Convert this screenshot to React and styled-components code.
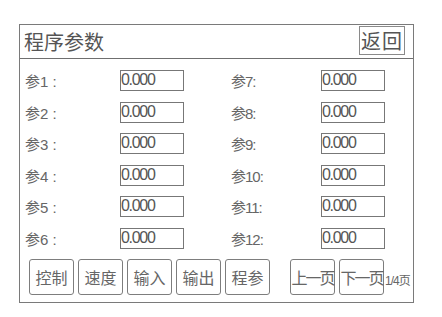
import React from "react";
import styled, { createGlobalStyle } from "styled-components";

const GlobalStyle = createGlobalStyle`
  html, body {
    margin: 0;
    padding: 0;
    background: #ffffff;
  }
  body {
    font-family: "Liberation Sans", "Noto Sans CJK SC", sans-serif;
    color: #555;
  }
`;

const Page = styled.div`
  width: 442px;
  height: 317px;
  padding: 24px 0 0 19px;
  box-sizing: border-box;
`;

const Frame = styled.div`
  width: 395px;
  height: 279px;
  box-sizing: border-box;
  border: 1.5px solid #7a7a7a;
  display: flex;
  flex-direction: column;
`;

const Header = styled.div`
  height: 34px;
  box-sizing: border-box;
  border-bottom: 1.5px solid #6f6f6f;
  display: flex;
  align-items: center;
  justify-content: space-between;
  padding: 0 8px 0 4px;
`;

const Title = styled.div`
  font-family: "Noto Sans CJK SC", sans-serif;
  font-size: 20px;
  color: #555;
`;

const BackButton = styled.div`
  width: 46px;
  height: 29px;
  box-sizing: border-box;
  border: 1.5px solid #8a8a8a;
  display: flex;
  align-items: center;
  justify-content: center;
  font-family: "Noto Sans CJK SC", sans-serif;
  font-size: 20px;
  letter-spacing: 1px;
  color: #555;
  margin-top: -2px;
`;

const Body = styled.div`
  display: grid;
  grid-template-columns: 95px 64px 47px 90px 64px;
  grid-auto-rows: 21px;
  row-gap: 10.6px;
  padding: 11px 0 0 5px;
  align-items: center;
`;

const Label = styled.div`
  font-family: "Liberation Sans", "Noto Sans CJK SC", sans-serif;
  font-size: 15px;
  color: #666;
  letter-spacing: ${(p) => (p.right ? "-1px" : "0")};
  grid-column: ${(p) => (p.right ? 4 : 1)};
`;

const Value = styled.div`
  height: 21px;
  box-sizing: border-box;
  border: 1.5px solid #777;
  font-family: "Liberation Sans", sans-serif;
  font-size: 16px;
  letter-spacing: -1.3px;
  color: #555;
  line-height: 18px;
  padding-left: 0;
  grid-column: ${(p) => (p.right ? 5 : 2)};
`;

const Footer = styled.div`
  display: flex;
  align-items: flex-end;
  padding: 10px 0 0 9px;
`;

const Group = styled.div`
  display: flex;
  gap: 4px;
  margin-right: ${(p) => p.space || 0}px;
`;

const Button = styled.div`
  width: 45px;
  height: 36px;
  box-sizing: border-box;
  border: 1.5px solid #7d7d7d;
  border-radius: 3px;
  display: flex;
  align-items: center;
  justify-content: center;
  font-family: "Noto Sans CJK SC", sans-serif;
  font-size: 16px;
  color: #666;
  letter-spacing: ${(p) => (p.tight ? "-2px" : "0")};
  white-space: nowrap;
`;

const PageNote = styled.div`
  font-family: "Liberation Sans", "Noto Sans CJK SC", sans-serif;
  font-size: 12px;
  letter-spacing: -1px;
  color: #666;
  margin: 0 0 7px 1px;
`;

const left = ["参1:", "参2:", "参3:", "参4:", "参5:", "参6:"];
const right = ["参7:", "参8:", "参9:", "参10:", "参11:", "参12:"];

export default function App() {
  return (
    <Page>
      <GlobalStyle />
      <Frame>
        <Header>
          <Title>程序参数</Title>
          <BackButton>返回</BackButton>
        </Header>
        <Body>
          {left.map((l, i) => (
            <React.Fragment key={l}>
              <Label>{l.replace(":", " :")}</Label>
              <Value>0.000</Value>
              <Label right>{right[i]}</Label>
              <Value right>0.000</Value>
            </React.Fragment>
          ))}
        </Body>
        <Footer>
          <Group space={20}>
            <Button>控制</Button>
            <Button>速度</Button>
            <Button>输入</Button>
            <Button>输出</Button>
            <Button>程参</Button>
          </Group>
          <Group>
            <Button tight>上一页</Button>
            <Button tight>下一页</Button>
          </Group>
          <PageNote>1/4页</PageNote>
        </Footer>
      </Frame>
    </Page>
  );
}
